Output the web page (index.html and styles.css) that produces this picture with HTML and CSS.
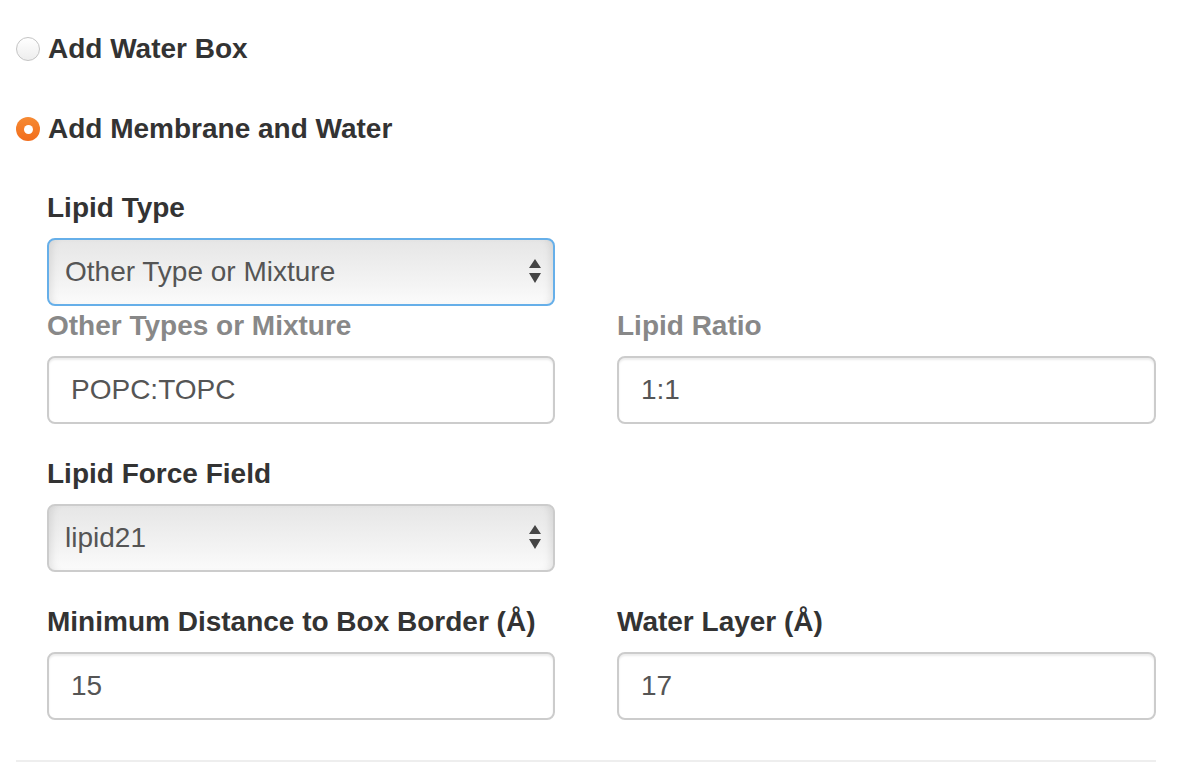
FILE: index.html
```html
<!DOCTYPE html>
<html lang="en">
<head>
<meta charset="utf-8">
<title>Membrane Builder</title>
<link rel="stylesheet" href="styles.css">
</head>
<body>
<div class="page">
  <div class="radio">
    <span class="radio-dot"></span>
    <span class="radio-label">Add Water Box</span>
  </div>
  <div class="radio radio-second">
    <span class="radio-dot checked"><span class="radio-inner"></span></span>
    <span class="radio-label">Add Membrane and Water</span>
  </div>

  <div class="membrane">
    <div class="row">
      <div class="field">
        <div class="label">Lipid Type</div>
        <div class="select focused">
          <span class="select-text">Other Type or Mixture</span>
          <svg class="arrows" width="12" height="24" viewBox="0 0 12 24"><path d="M6 0 L12 9 L0 9 Z M0 14 L12 14 L6 24 Z" fill="#454545"/></svg>
        </div>
      </div>
    </div>
    <div class="row group">
      <div class="field">
        <div class="label muted">Other Types or Mixture</div>
        <div class="input">POPC:TOPC</div>
      </div>
      <div class="field">
        <div class="label muted">Lipid Ratio</div>
        <div class="input">1:1</div>
      </div>
    </div>
    <div class="row group">
      <div class="field">
        <div class="label">Lipid Force Field</div>
        <div class="select">
          <span class="select-text">lipid21</span>
          <svg class="arrows" width="12" height="24" viewBox="0 0 12 24"><path d="M6 0 L12 9 L0 9 Z M0 14 L12 14 L6 24 Z" fill="#454545"/></svg>
        </div>
      </div>
    </div>
    <div class="row">
      <div class="field">
        <div class="label">Minimum Distance to Box Border (Å)</div>
        <div class="input">15</div>
      </div>
      <div class="field">
        <div class="label">Water Layer (Å)</div>
        <div class="input">17</div>
      </div>
    </div>
  </div>
  <div class="divider"></div>
</div>
</body>
</html>
```
FILE: styles.css
```css
html, body {
  margin: 0;
  padding: 0;
  background: #ffffff;
}

body {
  font-family: "Liberation Sans", Arial, Helvetica, sans-serif;
  font-size: 28px;
  color: #333333;
}

.page {
  padding: 29px 46px 0 16px;
}

.radio {
  display: flex;
  align-items: center;
  gap: 8px;
  height: 40px;
  line-height: 40px;
}

.radio-second {
  margin-top: 40px;
}

.radio-label {
  font-weight: bold;
  color: #333333;
}

.radio-dot {
  width: 24px;
  height: 24px;
  box-sizing: border-box;
  border-radius: 50%;
  border: 1px solid #c4c4c4;
  background: linear-gradient(#ffffff, #ededed);
  display: flex;
  align-items: center;
  justify-content: center;
  flex-shrink: 0;
}

.radio-dot.checked {
  border: none;
  background: linear-gradient(#f68a33, #f26d1c);
}

.radio-inner {
  width: 9px;
  height: 9px;
  border-radius: 50%;
  background: #ffffff;
}

.membrane {
  margin-top: 39px;
  padding-left: 31px;
}

.row {
  display: grid;
  grid-template-columns: 508px 1fr;
  column-gap: 62px;
}

.group {
  margin-bottom: 30px;
}

.label {
  font-weight: bold;
  line-height: 40px;
  margin-bottom: 10px;
  color: #333333;
  white-space: nowrap;
}

.label.muted {
  color: #888888;
}

.select {
  height: 68px;
  box-sizing: border-box;
  border: 2px solid #cccccc;
  border-radius: 8px;
  background: linear-gradient(#e6e6e6, #f4f4f4 70%, #fbfbfb);
  box-shadow: inset 8px 0 8px -6px rgba(0, 0, 0, 0.10), inset -8px 0 8px -6px rgba(0, 0, 0, 0.10);
  display: flex;
  align-items: center;
  justify-content: space-between;
  padding: 0 12px 0 16px;
  color: #555555;
}

.select.focused {
  border-color: #66afe9;
}

.select-text {
  line-height: 40px;
}

.arrows {
  display: block;
  margin-top: -2px;
}

.input {
  height: 68px;
  box-sizing: border-box;
  border: 2px solid #cccccc;
  border-radius: 8px;
  background: #ffffff;
  box-shadow: inset 0 2px 2px rgba(0, 0, 0, 0.075);
  display: flex;
  align-items: center;
  padding: 0 22px;
  color: #555555;
}

.divider {
  margin-top: 40px;
  height: 2px;
  background: #eeeeee;
}
```
